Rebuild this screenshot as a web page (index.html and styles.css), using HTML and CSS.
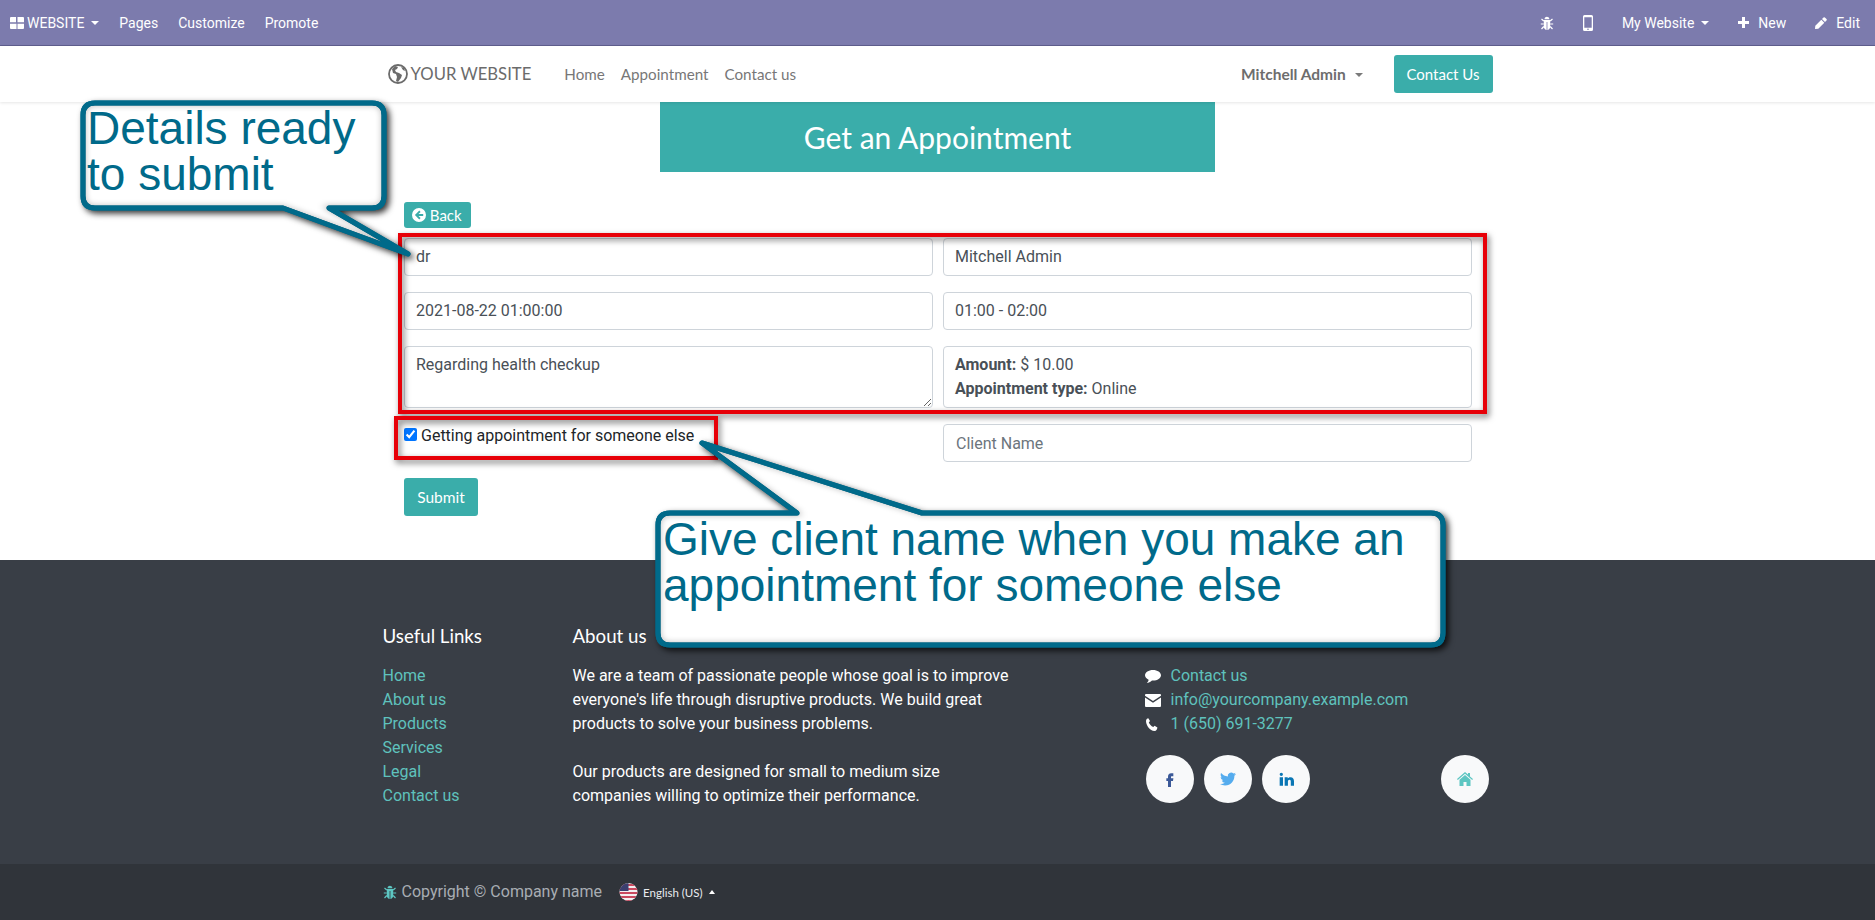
FILE: index.html
```html
<!DOCTYPE html>
<html lang="en">
<head>
  <meta charset="UTF-8">
  <title>Get an Appointment</title>
  <link rel="stylesheet" href="styles.css">
</head>
<body>
  <div class="topbar">
    <div class="topbar-left">
      <a class="tb-item tb-brand">
        <svg class="ic" width="14" height="12" viewBox="0 0 14 12"><path fill="#fff" d="M0 1q0-1 1-1h5v5.300H0zM7.500 0H13q1 0 1 1v4.300H7.500zM0 6.700h6.500V12H1q-1 0-1-1zM7.500 6.700H14V11q0 1-1 1H7.500z"/></svg>
        WEBSITE <span class="caret"></span>
      </a>
      <a class="tb-item">Pages</a>
      <a class="tb-item">Customize</a>
      <a class="tb-item">Promote</a>
    </div>
    <div class="topbar-right">
      <a class="tb-item">
        <svg width="14" height="14" viewBox="0 0 14 14"><path fill="#fff" d="M4.500 3.200a2.500 2.500 0 0 1 5 0zM3.800 4h6.400v6.500C10.200 12.500 8.600 14 7.400 14V6h-.8v8c-1.200 0-2.800-1.500-2.800-3.500z"/><path stroke="#fff" stroke-width="1.200" fill="none" d="M3.800 5 1.500 3M10.200 5l2.300-2M3.800 8H.8M10.200 8h3M3.800 10.500 1.500 13M10.200 10.500l2.300 2.500"/></svg>
      </a>
      <a class="tb-item tb-mobile">
        <svg width="10" height="16" viewBox="0 0 10 16"><path fill="#fff" fill-rule="evenodd" d="M1.500 0h7Q10 0 10 1.500v13Q10 16 8.500 16h-7Q0 16 0 14.500v-13Q0 0 1.500 0zM1.300 2.200v10.600h7.400V2.200zM5 13.500a.8.800 0 1 0 0 1.600.8.800 0 0 0 0-1.600z"/></svg>
      </a>
      <a class="tb-item tb-site">My Website <span class="caret"></span></a>
      <a class="tb-item">
        <svg class="ic" width="11" height="11" viewBox="0 0 11 11"><path fill="#fff" d="M4 0h3v4h4v3H7v4H4V7H0V4h4z"/></svg>
        New
      </a>
      <a class="tb-item">
        <svg class="ic" width="12" height="12" viewBox="0 0 12 12"><path fill="#fff" d="M8.500.5q.7-.6 1.400 0l1.600 1.600q.6.700 0 1.400L10 5 7 2zM6.300 2.700l3 3-6 6L0 12l.3-3.300z"/></svg>
        Edit
      </a>
    </div>
  </div>

  <header class="site-nav">
    <div class="nav-inner">
      <a class="logo">
        <svg width="20" height="20" viewBox="0 0 20 20"><circle cx="10" cy="10" r="9" fill="none" stroke="#6b6b6b" stroke-width="1.800"/><path fill="#6b6b6b" d="M7 2 4 5l1 4 3 1 1 3-1 4 2 1 3-4 1-3-3-2-3-1-1-2 2-1 1-2zM13 3l2 3 2 1-1-3z"/></svg>
        <span>YOUR WEBSITE</span>
      </a>
      <nav class="nav-links">
        <a>Home</a>
        <a>Appointment</a>
        <a>Contact us</a>
      </nav>
      <a class="nav-user">Mitchell Admin <span class="caret caret-grey"></span></a>
      <a class="btn nav-cta">Contact Us</a>
    </div>
  </header>

  <main class="content">
    <h1 class="banner">Get an Appointment</h1>
    <div class="form-wrap">
      <a class="btn btn-back">
        <svg class="ic" width="14" height="14" viewBox="0 0 14 14"><path fill="#fff" fill-rule="evenodd" d="M7 0a7 7 0 1 1 0 14A7 7 0 0 1 7 0zM7.300 2.600 2.900 7l4.400 4.400 1.300-1.300-2.100-2.100h4.700V6H6.500l2.100-2.100z"/></svg>
        Back
      </a>
      <form class="form-grid">
        <input class="field field-filled" type="text" value="dr">
        <input class="field field-filled" type="text" value="Mitchell Admin">
        <input class="field field-filled" type="text" value="2021-08-22 01:00:00">
        <input class="field field-filled" type="text" value="01:00 - 02:00">
        <textarea class="field field-area">Regarding health checkup</textarea>
        <div class="field field-info">
          <div><b>Amount:</b> $ 10.00</div>
          <div><b>Appointment type:</b> Online</div>
        </div>
        <label class="check-row"><input type="checkbox" checked>Getting appointment for someone else</label>
        <input class="field" type="text" placeholder="Client Name">
      </form>
      <a class="btn btn-submit">Submit</a>
    </div>
  </main>

  <footer class="footer">
    <div class="footer-main">
      <div class="col-links">
        <h5>Useful Links</h5>
        <ul>
          <li><a>Home</a></li>
          <li><a>About us</a></li>
          <li><a>Products</a></li>
          <li><a>Services</a></li>
          <li><a>Legal</a></li>
          <li><a>Contact us</a></li>
        </ul>
      </div>
      <div class="col-about">
        <h5>About us</h5>
        <p>We are a team of passionate people whose goal is to improve everyone's life through disruptive products. We build great products to solve your business problems.</p>
        <p>Our products are designed for small to medium size companies willing to optimize their performance.</p>
      </div>
      <div class="col-contact">
        <ul>
          <li>
            <svg width="16" height="15" viewBox="0 0 16 15"><path fill="#fff" d="M8 1c4.400 0 8 2.400 8 5.300s-3.600 5.300-8 5.300h-1C5.500 13 3.500 14 1.800 14c1-1 1.700-2 1.800-3.300C1.400 9.700 0 8.100 0 6.300 0 3.400 3.600 1 8 1z"/></svg>
            <a>Contact us</a>
          </li>
          <li>
            <svg width="16" height="13" viewBox="0 0 16 13"><path fill="#fff" d="M1 0h14q1 0 1 1v.8L8 7 0 1.800V1q0-1 1-1zM0 3.500l8 5.200 8-5.200V12q0 1-1 1H1q-1 0-1-1z"/></svg>
            <a>info@yourcompany.example.com</a>
          </li>
          <li>
            <svg width="16" height="13" viewBox="0 0 16 13"><path fill="#fff" d="M3.300.3 5 3 3.800 4.500c.7 1.800 2.300 3.600 4.500 4.500l1.300-1.300 2.800 1.700c0 1.200-1 3.600-2.900 3.600C5 13 1.200 7.700 1 3.300 1 1.500 2.200.3 3.300.3z"/></svg>
            <a>1 (650) 691-3277</a>
          </li>
        </ul>
        <div class="socials">
          <a class="social">
            <svg width="16" height="16" viewBox="0 0 24 24"><path fill="#3b5998" d="M14 8h3V3.500h-3.300C10.600 3.500 9 5.700 9 8.500V11H6.500v4H9v9h4.500v-9h3l.6-4h-3.600V9c0-.6.300-1 .5-1z"/></svg>
          </a>
          <a class="social">
            <svg width="16" height="16" viewBox="0 0 24 24"><path fill="#55acee" d="M23.953 4.570a10 10 0 01-2.825.775 4.958 4.958 0 002.163-2.723c-.951.555-2.005.959-3.127 1.184a4.920 4.920 0 00-8.384 4.482C7.690 8.095 4.067 6.130 1.640 3.162a4.822 4.822 0 00-.666 2.475c0 1.710.870 3.213 2.188 4.096a4.904 4.904 0 01-2.228-.616v.060a4.923 4.923 0 003.946 4.827 4.996 4.996 0 01-2.212.085 4.936 4.936 0 004.604 3.417 9.867 9.867 0 01-6.102 2.105c-.390 0-.779-.023-1.170-.067a13.995 13.995 0 007.557 2.209c9.053 0 13.998-7.496 13.998-13.985 0-.210 0-.420-.015-.630A9.935 9.935 0 0024 4.590z"/></svg>
          </a>
          <a class="social">
            <svg width="16" height="16" viewBox="0 0 24 24"><path fill="#0976b4" d="M4.980 2.500a2.500 2.500 0 11-.02 5 2.500 2.500 0 01.020-5zM2.500 9.500h5V22h-5zM10 9.500h4.600v1.700c.7-1.100 2.100-2 4-2 4 0 5.400 2.600 5.400 6.300V22h-4.800v-6c0-1.700-.3-3-2-3s-2.300 1.400-2.300 3v6H10z"/></svg>
          </a>
          <a class="social social-home">
            <svg width="16" height="14" viewBox="0 0 16 14"><path fill="#5dc6c2" d="M8 0l3 2.600V1h2v3.400L16 7l-.8 1L8 1.800.8 8 0 7zM8 3l5.500 4.700V14H9.500v-4h-3v4h-4V7.700z"/></svg>
          </a>
        </div>
      </div>
    </div>
    <div class="footer-bottom">
      <div class="bottom-inner">
        <svg class="bug" width="14" height="14" viewBox="0 0 14 14"><path fill="#5dc6c2" d="M4.500 3.200a2.500 2.500 0 0 1 5 0zM3.800 4h6.400v6.500C10.200 12.500 8.600 14 7.400 14V6h-.8v8c-1.200 0-2.800-1.500-2.800-3.500z"/><path stroke="#5dc6c2" stroke-width="1.200" fill="none" d="M3.800 5 1.500 3M10.200 5l2.300-2M3.800 8H.8M10.200 8h3M3.800 10.500 1.500 13M10.200 10.500l2.300 2.500"/></svg>
        <span class="copyright">Copyright © Company name</span>
        <svg class="flag" width="19" height="18" viewBox="0 0 19 18">
          <defs><clipPath id="flagClip"><circle cx="9.500" cy="9" r="9"/></clipPath></defs>
          <g clip-path="url(#flagClip)">
            <rect width="19" height="18" fill="#f4eef0"/>
            <path fill="#c9495f" d="M0 1h19v2H0zM0 5h19v2H0zM0 9h19v2H0zM0 13h19v2H0zM0 17h19v1H0z"/>
            <rect width="9.500" height="8" fill="#3b3f6f"/>
          </g>
        </svg>
        <span class="lang">English (US)</span>
        <span class="caret caret-up"></span>
      </div>
    </div>
  </footer>

  <!-- annotations drawn over the screenshot -->
  <svg class="notes" width="1875" height="920" viewBox="0 0 1875 920">
    <defs>
      <path id="bubbleOne" d="M95 103H372Q384 103 384 115V196Q384 208 372 208H329L408 254L283 208H95Q83 208 83 196V115Q83 103 95 103Z"/>
      <path id="bubbleTwo" d="M670 513H797L702 443L922 513H1431Q1443 513 1443 525V633Q1443 645 1431 645H670Q658 645 658 633V525Q658 513 670 513Z"/>
      <clipPath id="clipOne"><use href="#bubbleOne"/></clipPath>
      <clipPath id="clipTwo"><use href="#bubbleTwo"/></clipPath>
    </defs>
    <rect class="red-box" x="400" y="235" width="1085" height="177"/>
    <rect class="red-box" x="396" y="418" width="320" height="40"/>
    <use class="bubble" href="#bubbleOne"/>
    <g clip-path="url(#clipOne)"><use class="bubble-glow" href="#bubbleOne"/></g>
    <use class="bubble-line" href="#bubbleOne"/>
    <use class="bubble" href="#bubbleTwo"/>
    <g clip-path="url(#clipTwo)"><use class="bubble-glow" href="#bubbleTwo"/></g>
    <use class="bubble-line" href="#bubbleTwo"/>
  </svg>
  <div class="note note-one">Details ready<br>to submit</div>
  <div class="note note-two">Give client name when you make an<br>appointment for someone else</div>
</body>
</html>
```

FILE: styles.css
```css
* {
  box-sizing: border-box;
}
body {
  margin: 0;
  font-family: Roboto, sans-serif;
  font-size: 16px;
  line-height: 24px;
  color: #212529;
  background-color: #fff;
  height: 920px;
  overflow: hidden;
  position: relative;
}
ul {
  list-style: none;
  margin: 0;
  padding: 0;
}
.ic {
  vertical-align: -1px;
}

/* edit bar */
.topbar {
  height: 46px;
  display: flex;
  justify-content: space-between;
  align-items: center;
  padding: 0 15px 0 10px;
  background-color: #7c7bad;
  border-bottom: 1px solid #5f5e8e;
  color: #fff;
  font-size: 14px;
}
.topbar-left {
  display: flex;
  gap: 20px;
}
.topbar-right {
  display: flex;
  align-items: center;
  gap: 29px;
}
.tb-item {
  display: flex;
  align-items: center;
  gap: 9px;
  white-space: nowrap;
}
.tb-brand {
  gap: 3px;
}
.tb-site {
  gap: 3px;
}
.caret {
  display: inline-block;
  width: 0;
  height: 0;
  margin-left: 4px;
  border-top: 4px solid #fff;
  border-left: 4px solid transparent;
  border-right: 4px solid transparent;
}
.caret-grey {
  border-top-color: #7a7a7a;
  margin-left: 5px;
  vertical-align: 3px;
}
.caret-up {
  border-top: 0;
  border-bottom: 4px solid #fff;
  border-left-width: 3.500px;
  border-right-width: 3.500px;
  margin-left: 6px;
}

/* site nav */
.site-nav {
  height: 56px;
  background: #fff;
  box-shadow: 0 1px 3px rgba(0,0,0,0.1);
  position: relative;
}
.nav-inner {
  width: 1140px;
  height: 100%;
  margin: 0 auto;
  display: flex;
  align-items: center;
  padding: 0 15px 0 20px;
  color: #777;
}
.logo {
  display: flex;
  align-items: center;
  gap: 3px;
  font-family: Lato, sans-serif;
  font-size: 16.700px;
  color: #6b6b6b;
}
.nav-links {
  display: flex;
  gap: 16px;
  margin-left: 33px;
  font-family: Lato, sans-serif;
  font-size: 15.200px;
}
.nav-user {
  margin-left: auto;
  font-family: Lato, sans-serif;
  font-weight: 700;
  font-size: 15.500px;
  color: #6d6d6d;
}
.btn {
  display: inline-block;
  background-color: #3aadaa;
  color: #fff;
  border-radius: 3px;
  font-family: Lato, sans-serif;
}
.nav-cta {
  margin-left: 31px;
  height: 38px;
  line-height: 38px;
  width: 99px;
  text-align: center;
  font-size: 15px;
}

/* appointment form */
.content {
  height: 458px;
}
.banner {
  width: 555px;
  height: 70px;
  margin: 0 auto;
  background-color: #3aadaa;
  color: #fff;
  font-family: Lato, sans-serif;
  font-weight: 400;
  font-size: 30px;
  line-height: 70px;
  text-align: center;
}
.form-wrap {
  width: 1068px;
  margin: 30px 0 0 404px;
}
.btn-back {
  display: block;
  width: 67px;
  height: 26px;
  line-height: 26px;
  padding-left: 8px;
  font-size: 15px;
  margin-bottom: 10px;
}
.form-grid {
  display: grid;
  grid-template-columns: 529px 529px;
  column-gap: 10px;
  row-gap: 16px;
}
.field {
  display: block;
  width: 100%;
  height: 38px;
  padding: 6px 12px;
  border: 1px solid #ced4da;
  border-radius: 4px;
  font-family: Roboto, sans-serif;
  font-size: 16px;
  line-height: 24px;
  color: #495057;
  background: #fff;
}
.field::placeholder {
  color: #6c757d;
}
.field-filled {
  padding: 5px 11px 7px;
}
.field-area {
  height: 62px;
  margin: 0;
  padding-left: 11px;
}
.field-info {
  height: 62px;
  padding-left: 11px;
}
.check-row {
  display: flex;
  align-items: flex-start;
  gap: 4px;
  color: #212529;
}
.check-row input {
  width: 13px;
  height: 13px;
  margin: 4px 0 0;
}
.btn-submit {
  display: block;
  width: 74px;
  height: 38px;
  line-height: 38px;
  margin-top: 16px;
  text-align: center;
  font-size: 15.500px;
}

/* footer */
.footer {
  background-color: #393e46;
  color: #fff;
}
.footer-main {
  width: 1140px;
  height: 304px;
  margin: 0 auto;
  padding: 64px 15px 0;
  display: flex;
}
.footer h5 {
  margin: 0 0 16px;
  font-family: Lato, sans-serif;
  font-weight: 400;
  font-size: 18.700px;
  line-height: 24px;
}
.footer a {
  color: #5fc2bd;
}
.col-links {
  width: 190px;
}
.col-about {
  width: 445px;
  margin-right: 127px;
}
.col-about p {
  margin: 0 0 24px;
}
.col-contact {
  width: 344px;
  padding-top: 40px;
}
.col-contact li {
  display: flex;
  align-items: center;
  gap: 10px;
  height: 24px;
}
.socials {
  display: flex;
  gap: 10px;
  margin-top: 19px;
  margin-left: 1px;
}
.social {
  width: 48px;
  height: 48px;
  border-radius: 50%;
  background-color: #f8f9fa;
  display: flex;
  align-items: center;
  justify-content: center;
}
.social-home {
  margin-left: auto;
}
.footer-bottom {
  height: 56px;
  background-color: #30343a;
}
.bottom-inner {
  width: 1140px;
  height: 100%;
  margin: 0 auto;
  padding: 0 15px;
  display: flex;
  align-items: center;
}
.bug {
  margin-right: 5px;
}
.copyright {
  color: #a8adb3;
}
.flag {
  margin-left: 17px;
  margin-right: 5px;
}
.lang {
  font-family: Lato, sans-serif;
  font-size: 11.500px;
  color: #e9ecef;
  padding-top: 2px;
}

/* annotations */
.notes {
  position: absolute;
  left: 0;
  top: 0;
  pointer-events: none;
}
.red-box {
  fill: none;
  stroke: #e70008;
  stroke-width: 4;
  filter: drop-shadow(2px 3px 3px rgba(0,0,0,0.55));
}
.bubble {
  fill: #fff;
  stroke: #006a8a;
  stroke-width: 5;
  stroke-linejoin: round;
  filter: drop-shadow(3px 3px 3px rgba(0,0,0,0.8));
}
.bubble-glow {
  fill: none;
  stroke: rgba(0,0,0,0.35);
  stroke-width: 4;
  filter: blur(3px);
}
.bubble-line {
  fill: none;
  stroke: #006a8a;
  stroke-width: 5;
  stroke-linejoin: round;
}
.note {
  position: absolute;
  font-family: "Liberation Sans", Arial, sans-serif;
  font-size: 46px;
  line-height: 46px;
  color: #006a8a;
  white-space: nowrap;
}
.note-one {
  left: 87px;
  top: 105px;
}
.note-two {
  left: 663px;
  top: 516px;
}
```
